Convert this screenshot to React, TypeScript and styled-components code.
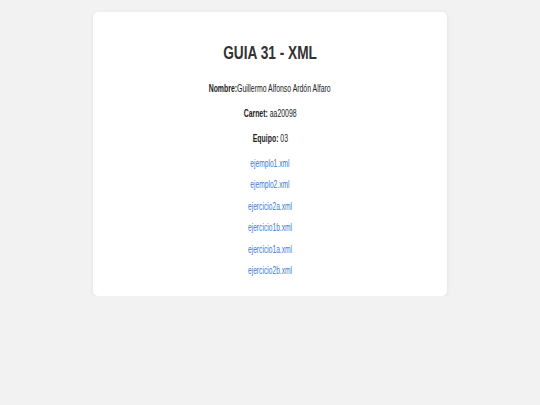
import React from "react";
import styled, { createGlobalStyle } from "styled-components";

const Global = createGlobalStyle`
  html, body { margin: 0; padding: 0; background: #f2f2f2; }
  body { font-family: "Liberation Sans", Arial, sans-serif; color: #333; }
`;

const Page = styled.div`
  padding-top: 12px;
  display: flex;
  justify-content: center;
`;

const Card = styled.div`
  width: 354px;
  box-sizing: border-box;
  background: #fff;
  border-radius: 5px;
  box-shadow: 0 1px 4px rgba(0, 0, 0, 0.08);
  padding: 30px 20px 19px;
  display: flex;
  flex-direction: column;
  align-items: center;
`;

const Title = styled.h1`
  margin: 0 0 18px;
  font-size: 19px;
  line-height: 22px;
  font-weight: bold;
  color: #333;
  transform: scaleX(0.72);
`;

const Info = styled.p`
  margin: 0 0 12px;
  font-size: 11.5px;
  line-height: 13px;
  color: #222;
  transform: scaleX(0.6);
  white-space: nowrap;
`;

const Links = styled.div`
  display: flex;
  flex-direction: column;
  align-items: center;
  gap: 8px;
`;

const FileLink = styled.a`
  color: #3a7bd5;
  text-decoration: none;
  font-size: 11.5px;
  line-height: 13.4px;
  transform: scaleX(0.58);
  white-space: nowrap;
`;

const files = [
  "ejemplo1.xml",
  "ejemplo2.xml",
  "ejercicio2a.xml",
  "ejercicio1b.xml",
  "ejercicio1a.xml",
  "ejercicio2b.xml",
];

export default function App() {
  return (
    <>
      <Global />
      <Page>
        <Card>
          <Title>GUIA 31 - XML</Title>
          <Info>
            <strong>Nombre:</strong>Guillermo Alfonso Ardón Alfaro
          </Info>
          <Info>
            <strong>Carnet:</strong> aa20098
          </Info>
          <Info>
            <strong>Equipo:</strong> 03
          </Info>
          <Links>
            {files.map((f) => (
              <FileLink key={f} href="#">
                {f}
              </FileLink>
            ))}
          </Links>
        </Card>
      </Page>
    </>
  );
}
